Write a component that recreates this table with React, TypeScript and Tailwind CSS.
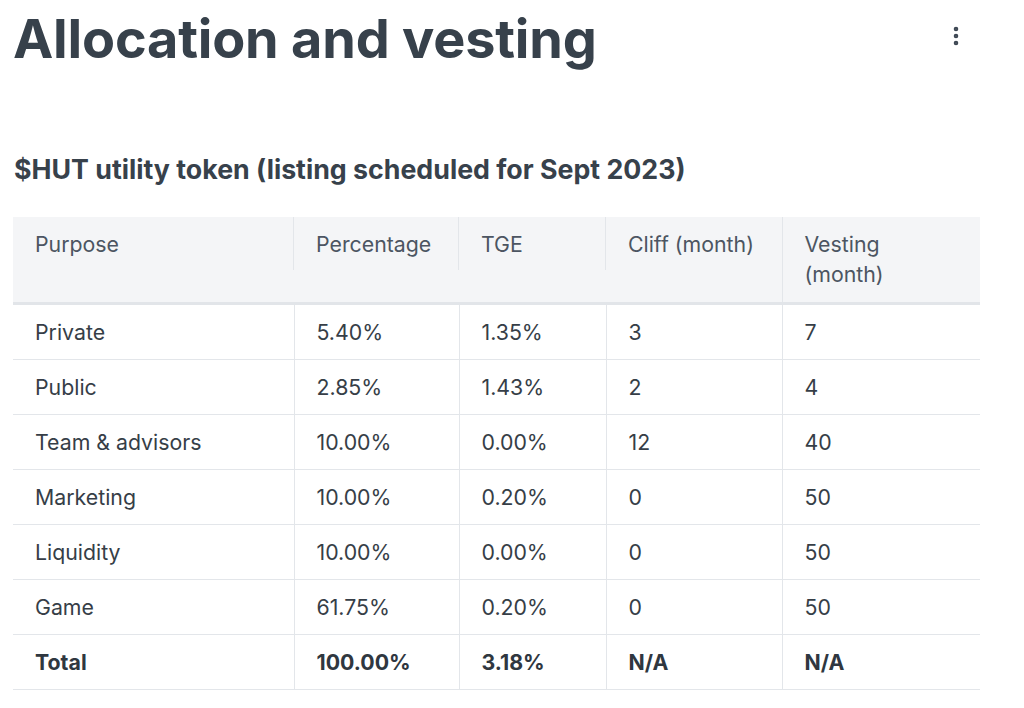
import { EllipsisVertical } from "lucide-react";

const rows = [
  ["Private", "5.40%", "1.35%", "3", "7"],
  ["Public", "2.85%", "1.43%", "2", "4"],
  ["Team & advisors", "10.00%", "0.00%", "12", "40"],
  ["Marketing", "10.00%", "0.20%", "0", "50"],
  ["Liquidity", "10.00%", "0.00%", "0", "50"],
  ["Game", "61.75%", "0.20%", "0", "50"],
];

const total = ["Total", "100.00%", "3.18%", "N/A", "N/A"];

const widths = ["w-[281px]", "w-[165px]", "w-[147px]", "w-[176px]", "w-[198px]"];

export default function App() {
  return (
    <div className="min-h-[708px] bg-white font-['Inter',sans-serif] text-[#363e47]">
      <div className="flex items-start justify-between pl-[13px] pr-[56px] pt-[1px]">
        <h1 className="text-[54px] font-bold leading-[76px] tracking-[-0.2px] text-[#37414b]">Allocation and vesting</h1>
        <EllipsisVertical size={24} strokeWidth={2.6} className="mt-[23px] text-[#3d4753]" />
      </div>

      <h2 className="mt-[75px] pl-[14px] text-[26.75px] font-bold leading-[34px] text-[#37414b]">
        $HUT utility token (listing scheduled for Sept 2023)
      </h2>

      <table className="mt-[31px] ml-[13px] table-fixed border-collapse text-[21.3px] leading-[30px]">
        <thead>
          <tr className="bg-[#f4f5f7] text-[#4c5562]">
            {["Purpose", "Percentage", "TGE", "Cliff (month)", "Vesting (month)"].map((h, i) => (
              <th
                key={h}
                className={`${widths[i]} relative px-[22px] pt-3 pb-[13px] text-left align-top font-normal ${i === 4 ? "border-l border-[#e3e6ea]" : ""}`}
              >
                {i === 4 ? (
                  <>
                    Vesting
                    <br />
                    (month)
                  </>
                ) : (
                  h
                )}
                {i < 3 && <span className="absolute right-0 top-0 h-[53px] w-px bg-[#e3e6ea]" />}
              </th>
            ))}
          </tr>
          <tr>
            <td colSpan={5} className="h-[3px] bg-[#e2e5e9] p-0" />
          </tr>
        </thead>
        <tbody>
          {rows.map((r) => (
            <tr key={r[0]} className="border-b border-[#e3e6ea]">
              {r.map((c, i) => (
                <td key={i} className={`px-[22px] py-3 ${i > 0 ? "border-l border-[#e3e6ea]" : ""}`}>
                  {c}
                </td>
              ))}
            </tr>
          ))}
          <tr className="border-b border-[#e3e6ea]">
            {total.map((c, i) => (
              <td key={i} className={`px-[22px] py-3 font-bold text-[#2f3740] ${i > 0 ? "border-l border-[#e3e6ea]" : ""}`}>
                {c}
              </td>
            ))}
          </tr>
        </tbody>
      </table>
    </div>
  );
}
